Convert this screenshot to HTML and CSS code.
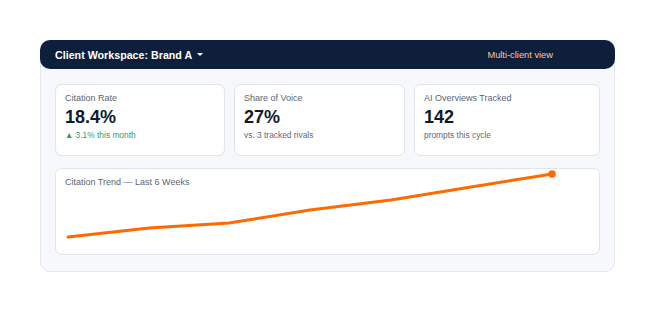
FILE: index.html
```html
<!DOCTYPE html>
<html lang="en">
<head>
    <meta charset="UTF-8">
    <meta name="viewport" content="width=device-width, initial-scale=1.0">
    <title>Client Workspace</title>
    <link rel="stylesheet" href="styles.css">
</head>
<body>

    <div class="workspace">
        <div class="topbar">
            <div class="client">Client Workspace: Brand A <span class="caret"></span></div>
            <div class="mode">Multi-client view</div>
        </div>

        <div class="content">
            <div class="stats">
                <div class="card">
                    <div class="label">Citation Rate</div>
                    <div class="value">18.4%</div>
                    <div class="sub up">&#9650; 3.1% this month</div>
                </div>
                <div class="card">
                    <div class="label">Share of Voice</div>
                    <div class="value">27%</div>
                    <div class="sub">vs. 3 tracked rivals</div>
                </div>
                <div class="card">
                    <div class="label">AI Overviews Tracked</div>
                    <div class="value">142</div>
                    <div class="sub">prompts this cycle</div>
                </div>
            </div>

            <div class="card chart">
                <div class="label">Citation Trend &mdash; Last 6 Weeks</div>
                <svg class="trend" viewBox="0 0 525 60" preserveAspectRatio="none">
                    <polyline points="3,48 84,39 164,34 245,21 326,11 406,-2 487,-15"
                              fill="none" stroke="#ff6a00" stroke-width="3"
                              stroke-linejoin="round" stroke-linecap="round"/>
                    <circle cx="487" cy="-15" r="3.8" fill="#ff6a00"/>
                </svg>
            </div>
        </div>
    </div>

</body>
</html>
```

FILE: styles.css
```css
* {
    padding: 0;
    margin: 0;
    box-sizing: border-box;
}
body {
    padding: 40px;
    font-family: "Liberation Sans", Arial, sans-serif;
    background: #ffffff;
}
.workspace {
    width: 575px;
    border: 1px solid #e3e8f0;
    border-radius: 10px;
    background-color: #f6f8fc;
    padding-bottom: 16px;
}
.topbar {
    margin: -1px -1px 0;
    height: 29px;
    border-radius: 10px;
    background-color: #0e1f3b;
    display: flex;
    align-items: center;
    justify-content: space-between;
    padding: 0 62px 0 15px;
}
.client {
    color: #ffffff;
    font-size: 10.7px;
    font-weight: bold;
    display: flex;
    align-items: center;
}
.caret {
    display: inline-block;
    margin-left: 5px;
    border-left: 3px solid transparent;
    border-right: 3px solid transparent;
    border-top: 3px solid #ffffff;
}
.mode {
    color: #f4c9a2;
    font-size: 9.3px;
}
.content {
    padding: 15px 14px 0;
}
.stats {
    display: grid;
    grid-template-columns: 170fr 171fr 186fr;
    gap: 9px;
    margin-bottom: 12px;
}
.card {
    background-color: #ffffff;
    border: 1px solid #dfe5ee;
    border-radius: 7px;
    padding: 8px 9px 0;
    height: 72px;
}
.label {
    font-size: 9px;
    line-height: 11px;
    color: #5b6574;
}
.value {
    margin-top: 2px;
    font-size: 18px;
    line-height: 22px;
    font-weight: bold;
    color: #0f1a2e;
}
.sub {
    margin-top: 2px;
    font-size: 8.4px;
    line-height: 11px;
    color: #5f6877;
}
.sub.up {
    color: #2f9e63;
}
.chart {
    height: 87px;
}
.trend {
    display: block;
    width: 100%;
    height: 60px;
    margin-top: 1px;
    overflow: visible;
}
```
